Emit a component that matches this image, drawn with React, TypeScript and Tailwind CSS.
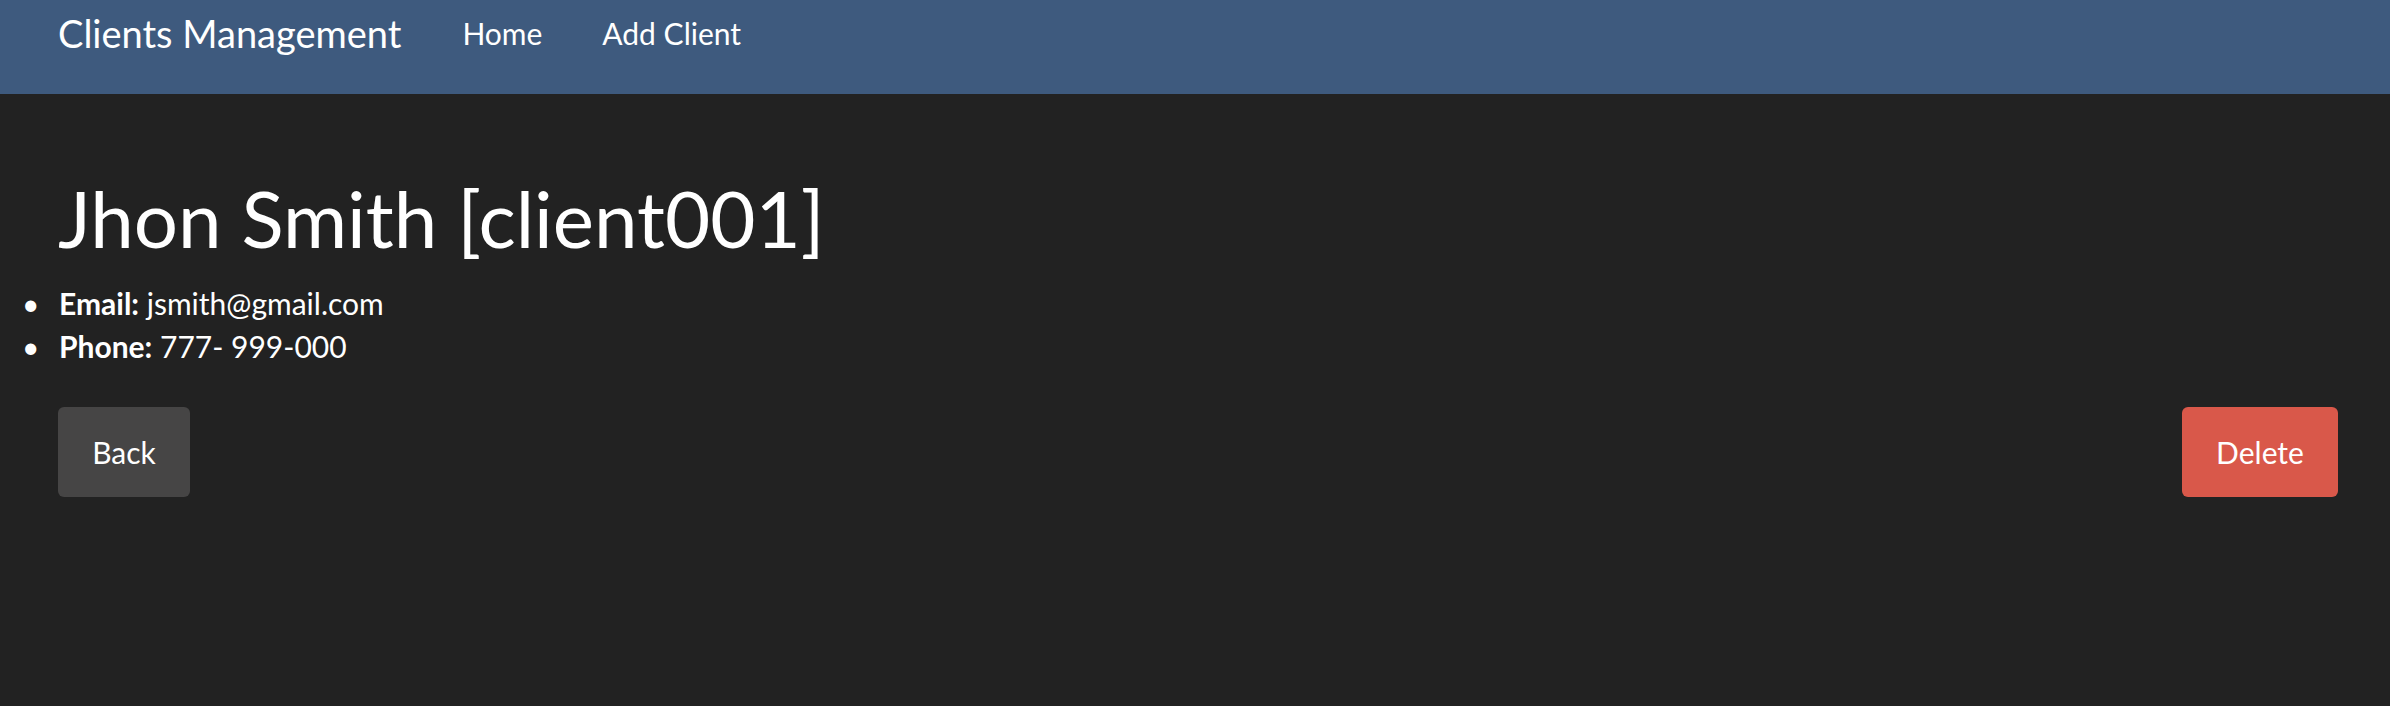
export default function App() {
  return (
    <div className="min-h-screen bg-[#222222] text-white font-['Lato','Liberation_Sans',sans-serif]">
      <nav className="h-[94px] bg-[#3e5a7e] flex items-start pl-[58px]">
        <a className="pt-[14px] text-[38px] leading-[38px] text-white">Clients Management</a>
        <ul className="flex pl-[31px]">
          <li>
            <a className="block px-[30px] pt-[18px] text-[30px] leading-[30px] text-white">Home</a>
          </li>
          <li>
            <a className="block px-[30px] pt-[18px] text-[30px] leading-[30px] text-white">Add Client</a>
          </li>
        </ul>
      </nav>

      <main className="pt-[82px]">
        <h1 className="pl-[58px] text-[78px] leading-[1.1] font-normal">Jhon Smith [client001]</h1>
        <ul className="mt-[20px] text-[30px] leading-[1.428]">
          <li className="flex">
            <span className="w-[59px] pl-[22px] shrink-0">•</span>
            <span>
              <b className="font-bold">Email:</b> jsmith@gmail.com
            </span>
          </li>
          <li className="flex">
            <span className="w-[59px] pl-[22px] shrink-0">•</span>
            <span>
              <b className="font-bold">Phone:</b> 777- 999-000
            </span>
          </li>
        </ul>
        <div className="mt-[40px] pl-[58px] pr-[52px] flex justify-between">
          <button className="h-[90px] w-[132px] rounded-[6px] bg-[#464545] text-[30px] text-white">Back</button>
          <button className="h-[90px] w-[156px] rounded-[6px] bg-[#d9584a] text-[30px] text-white">Delete</button>
        </div>
      </main>
    </div>
  );
}
